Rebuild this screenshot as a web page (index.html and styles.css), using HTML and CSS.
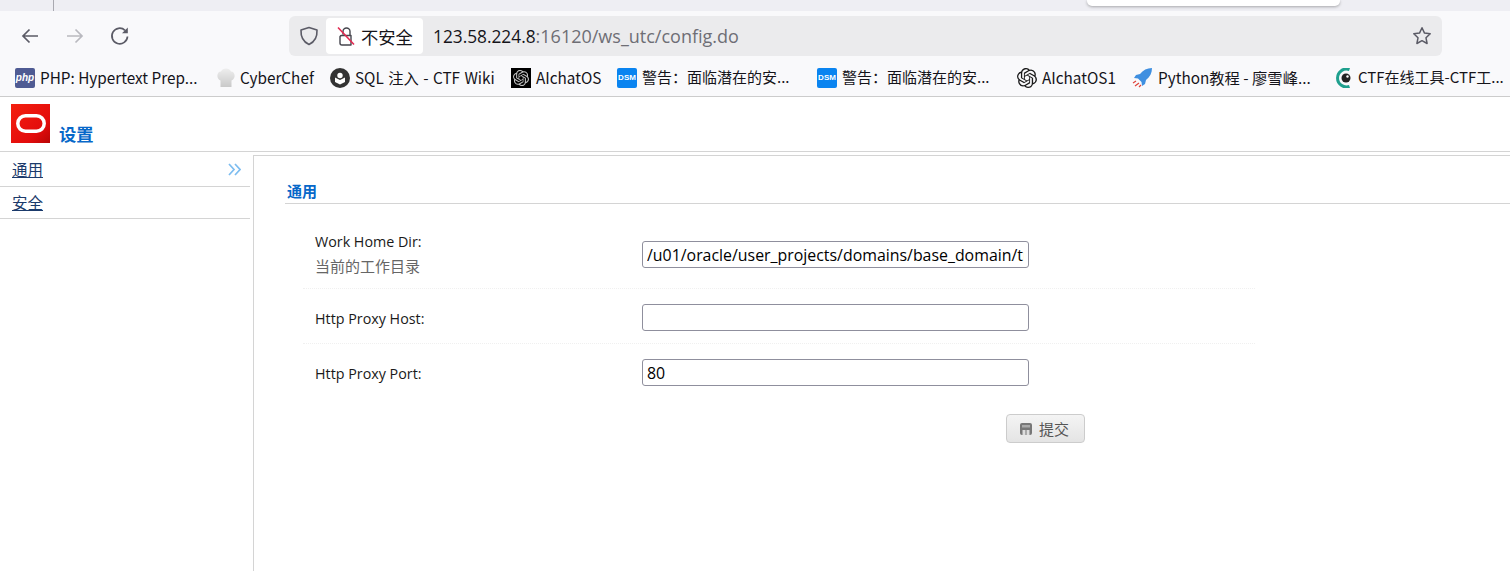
FILE: index.html
```html
<!DOCTYPE html>
<html lang="zh">
<head>
<meta charset="utf-8">
<title>设置</title>
<link rel="stylesheet" href="styles.css">
</head>
<body>
<div class="tabstrip"><span class="tabsep"></span><span class="popup"></span></div>
<div class="toolbar">
  <svg class="nav nav-back" viewBox="0 0 20 20"><path d="M18 10H3M9.500 3.500 3 10l6.500 6.500" fill="none" stroke="#5b5b66" stroke-width="1.700"/></svg>
  <svg class="nav nav-fwd" viewBox="0 0 20 20"><path d="M2 10h15M10.500 3.500 17 10l-6.500 6.500" fill="none" stroke="#b9b9bf" stroke-width="1.700"/></svg>
  <svg class="nav nav-reload" viewBox="0 0 20 20"><path d="M17.500 10.500A7.800 7.800 0 1 1 15 4.300" fill="none" stroke="#5b5b66" stroke-width="1.700"/><path d="M17.800 1.500v5.800H12z" fill="#5b5b66"/></svg>
  <div class="urlbar">
    <svg class="shield" viewBox="0 0 20 20"><path d="M10 1.500 18 4c.4 7.500-2.500 12-8 14.500C4.500 16 1.600 11.500 2 4z" fill="none" stroke="#5b5b66" stroke-width="1.600" stroke-linejoin="round"/></svg>
    <div class="insecure">
      <svg class="lock" viewBox="0 0 18 20"><path d="M6 8.500V5.500a3.500 3.500 0 0 1 7 0V9.500M3 10.500a2 2 0 0 1 2-1h9v9.500H5a2 2 0 0 1-2-2z" fill="none" stroke="#45454d" stroke-width="1.400" stroke-linejoin="round"/><path d="M1 1.500l16 17" stroke="#e22850" stroke-width="1.600"/></svg>
      <span>不安全</span>
    </div>
    <div class="url"><span class="host">123.58.224.8</span>:16120/ws_utc/config.do</div>
    <svg class="star" viewBox="0 0 20 20"><path d="m10 1.800 2.500 5.300 5.700.7-4.200 4 1.100 5.700-5.100-2.800-5.100 2.800L6 11.800l-4.200-4 5.700-.7z" fill="none" stroke="#5b5b66" stroke-width="1.500" stroke-linejoin="round"/></svg>
  </div>
</div>
<div class="bookmarks">
  <a class="bm bm-php"><span class="fav fav-php">php</span>PHP: Hypertext Prep...</a>
  <a class="bm bm-chef"><svg class="fav" viewBox="0 0 20 20"><defs><linearGradient id="ch" x1="0" y1="0" x2="0" y2="1"><stop offset="0" stop-color="#eeeeee"/><stop offset="1" stop-color="#c9c9c9"/></linearGradient></defs><path d="M4.500 12.500C0 11 .5 3.500 5 3.500c1.500-4 8.500-4 10 0 4.500 0 5 7.500.5 9V19h-11z" fill="url(#ch)"/></svg>CyberChef</a>
  <a class="bm bm-sql"><svg class="fav" viewBox="0 0 20 20"><circle cx="10" cy="10" r="10" fill="#333"/><path d="M5 9.500 10 12l5-2.500v4.500l-5 2.500-5-2.500z" fill="#fff"/><circle cx="10" cy="7.500" r="2.700" fill="#fff"/></svg>SQL 注入 - CTF Wiki</a>
  <a class="bm bm-ai"><span class="fav fav-ai"><svg class="knot knot-light" viewBox="0 0 24 24"><use href="#openai"/></svg></span>AIchatOS</a>
  <a class="bm bm-dsm"><span class="fav fav-dsm">DSM</span>警告：面临潜在的安...</a>
  <a class="bm bm-dsm2"><span class="fav fav-dsm">DSM</span>警告：面临潜在的安...</a>
  <a class="bm bm-ai1"><svg class="fav" viewBox="0 0 24 24"><path id="openai" d="M22.2819 9.8211a5.9847 5.9847 0 0 0-.5157-4.9108 6.0462 6.0462 0 0 0-6.5098-2.9A6.0651 6.0651 0 0 0 4.9807 4.1818a5.9847 5.9847 0 0 0-3.9977 2.9 6.0462 6.0462 0 0 0 .7427 7.0966 5.98 5.98 0 0 0 .511 4.9107 6.051 6.051 0 0 0 6.5146 2.9001A5.9847 5.9847 0 0 0 13.2599 24a6.0557 6.0557 0 0 0 5.7718-4.2058 5.9894 5.9894 0 0 0 3.9977-2.9001 6.0557 6.0557 0 0 0-.7475-7.0729zm-9.022 12.6081a4.4755 4.4755 0 0 1-2.8764-1.0408l.1419-.0804 4.7783-2.7582a.7948.7948 0 0 0 .3927-.6813v-6.7369l2.02 1.1686a.071.071 0 0 1 .038.052v5.5826a4.504 4.504 0 0 1-4.4945 4.4944zm-9.6607-4.1254a4.4708 4.4708 0 0 1-.5346-3.0137l.142.0852 4.783 2.7582a.7712.7712 0 0 0 .7806 0l5.8428-3.3685v2.3324a.0804.0804 0 0 1-.0332.0615L9.74 19.9502a4.4992 4.4992 0 0 1-6.1408-1.6464zM2.3408 7.8956a4.485 4.485 0 0 1 2.3655-1.9728V11.6a.7664.7664 0 0 0 .3879.6765l5.8144 3.3543-2.0201 1.1685a.0757.0757 0 0 1-.071 0l-4.8303-2.7865A4.504 4.504 0 0 1 2.3408 7.872zm16.5963 3.8558L13.1038 8.364 15.1192 7.2a.0757.0757 0 0 1 .071 0l4.8303 2.7913a4.4944 4.4944 0 0 1-.6765 8.1042v-5.6772a.79.79 0 0 0-.407-.667zm2.0107-3.0231l-.142-.0852-4.7735-2.7818a.7759.7759 0 0 0-.7854 0L9.409 9.2297V6.8974a.0662.0662 0 0 1 .0284-.0615l4.8303-2.7866a4.4992 4.4992 0 0 1 6.6802 4.66zM8.3065 12.863l-2.02-1.1638a.0804.0804 0 0 1-.038-.0567V6.0742a4.4992 4.4992 0 0 1 7.3757-3.4537l-.142.0805L8.704 5.459a.7948.7948 0 0 0-.3927.6813zm1.0976-2.3654l2.602-1.4998 2.6069 1.4998v2.9994l-2.5974 1.4997-2.6067-1.4997Z" fill="#1a1a1a"/></svg>AIchatOS1</a>
  <a class="bm bm-py"><svg class="fav" viewBox="0 0 20 20"><path d="M20 0c-5 0-9 2-12 6L4 7l-2 3 4 .5L9.500 14l.5 4 3-2 1-4c4-3 6-7 6-12z" fill="#3f8fe0"/><path d="M1 15l3-2M3 18l4-3M7 19l2-2" stroke="#e0433a" stroke-width="1.200"/></svg>Python教程 - 廖雪峰...</a>
  <a class="bm bm-ctf"><svg class="fav" viewBox="0 0 20 20"><path d="M15.500 1.500a9 9 0 1 0 0 17" fill="none" stroke="#1fa08e" stroke-width="3"/><circle cx="12" cy="10" r="4.500" fill="#222"/><circle cx="13.500" cy="8.500" r="1.200" fill="#fff"/></svg>CTF在线工具-CTF工...</a>
</div>
<header class="apphead">
  <svg class="logo" viewBox="0 0 39 39"><defs><linearGradient id="lg" x1="0" y1="0" x2="1" y2="1"><stop offset="0" stop-color="#f4200f"/><stop offset=".7" stop-color="#e30c0c"/><stop offset="1" stop-color="#b80505"/></linearGradient></defs><rect width="39" height="39" fill="url(#lg)"/><rect x="6.800" y="11.800" width="26.400" height="15.400" rx="7.700" fill="none" stroke="#fff" stroke-width="3.500"/></svg>
  <h1 class="title">设置</h1>
</header>
<div class="main">
  <nav class="side">
    <a class="side-item">通用<svg class="chev" viewBox="0 0 13 13"><path d="M1 1l5 5.500L1 12M7 1l5 5.500L7 12" fill="none" stroke="#7dbdf0" stroke-width="1.700"/></svg></a>
    <a class="side-item side-item-last">安全</a>
  </nav>
  <section class="panel">
    <h2 class="section-title">通用</h2>
    <form class="form">
      <div class="row row-first">
        <div class="label">Work Home Dir:<div class="hint">当前的工作目录</div></div>
        <input class="field" type="text" value="/u01/oracle/user_projects/domains/base_domain/tmp/WSUTC">
      </div>
      <div class="row">
        <div class="label label-single">Http Proxy Host:</div>
        <input class="field" type="text" value="">
      </div>
      <div class="row row-last">
        <div class="label label-single">Http Proxy Port:</div>
        <input class="field" type="text" value="80">
      </div>
      <div class="actions">
        <button class="submit" type="button"><svg class="save" viewBox="0 0 12 12"><rect width="12" height="12" rx="2" fill="#777"/><path d="M2 2h8v2.500H2z" fill="#aaa"/><path d="M2.500 7h7v5h-7z" fill="#ddd"/><path d="M5.500 7h1v5h-1z" fill="#777"/></svg>提交</button>
      </div>
    </form>
  </section>
</div>
</body>
</html>
```

FILE: styles.css
```css
html, body { margin: 0; padding: 0; height: 100%; overflow: hidden; background: #fff; }
body { font-family: "Noto Sans CJK SC", "Noto Sans", sans-serif; color: #15141a; }
a { color: inherit; }

.tabstrip { height: 11px; background: #eeeef3; position: relative; }
.tabsep { display: block; width: 1px; height: 11px; background: #a9a9b0; margin-left: 53px; }
.popup { position: absolute; left: 1087px; top: 0; width: 253px; height: 6px; background: #fff; border-radius: 0 0 5px 5px; box-shadow: 0 1px 3px rgba(0,0,0,.3); }

.toolbar { height: 45px; background: #f9f9fb; display: flex; align-items: flex-end; box-sizing: border-box; position: relative; }
.nav { width: 20px; height: 20px; flex: none; align-self: center; margin-top: 5px; }
.nav-back { margin-left: 20px; }
.nav-fwd { margin-left: 25px; }
.nav-reload { margin-left: 25px; }
.urlbar { margin-left: 159px; width: 1153px; height: 40px; background: #ebebed; border-radius: 6px; display: flex; align-items: center; flex: none; }
.shield { width: 20px; height: 20px; margin-left: 10px; flex: none; }
.insecure { margin-left: 7px; width: 97px; height: 36px; background: #fff; border-radius: 4px; display: flex; align-items: center; font-size: 17.300px; flex: none; padding-left: 11px; box-sizing: border-box; gap: 6px; white-space: nowrap; }
.lock { width: 18px; height: 20px; flex: none; }
.url { margin-left: 10px; font-family: "Open Sans", sans-serif; font-size: 18px; color: #6e6e75; white-space: nowrap; flex: 1; }
.host { color: #15141a; font-size: 17.300px; }
.star { width: 20px; height: 20px; margin-right: 10px; flex: none; }

.bookmarks { height: 39px; padding-top: 1px; background: #f9f9fb; border-bottom: 1px solid #ccc; display: flex; align-items: center; font-size: 15.300px; white-space: nowrap; position: relative; box-sizing: content-box; }
.bm { display: flex; align-items: center; gap: 5px; flex: none; }
.fav { width: 20px; height: 20px; flex: none; display: block; margin-top: 2px; }
.fav-php { background: #4f5b93; color: #fff; border-radius: 2px; font: italic bold 10px/20px "Liberation Sans", sans-serif; text-align: center; }
.fav-dsm { background: #0a84f0; color: #fff; border-radius: 2px; font: bold 8px/20px "Liberation Sans", sans-serif; text-align: center; }
.fav-ai { background: #000; padding: 2px; box-sizing: border-box; }
.knot { display: block; width: 16px; height: 16px; }
.knot-light { filter: invert(1) brightness(.85); }
.bm-php { margin-left: 15px; width: 201px; }
.bm-chef { width: 114px; gap: 4px; }
.bm-sql { width: 181px; word-spacing: 1px; }
.bm-ai { width: 106px; }
.bm-dsm { width: 200px; font-size: 15px; }
.bm-dsm2 { width: 200px; font-size: 15px; }
.bm-ai1 { width: 115px; }
.bm-py { width: 202px; gap: 6px; }
.bm-ctf { gap: 4px; font-size: 15px; }

.apphead { height: 54px; border-bottom: 1px solid #d4d4d4; display: flex; align-items: flex-start; box-sizing: content-box; }
.logo { width: 39px; height: 39px; margin: 7px 0 0 11px; flex: none; }
.title { margin: 27px 0 0 9px; font-size: 17.300px; line-height: 20px; font-weight: bold; color: #0768c9; }

.main { display: flex; height: 419px; }
.side { width: 250px; flex: none; }
.side-item { display: flex; justify-content: space-between; align-items: center; height: 31px; padding: 0 9px 0 12px; border-bottom: 1px solid #d4d4d4; font-size: 15.500px; color: #1b3a6b; text-decoration: underline; }
.side-item:first-child { height: 34px; }
.side-item-last { height: 29px; padding-bottom: 2px; }
.chev { width: 13px; height: 13px; }

.panel { margin: 3px 0 0 3px; flex: 1; border-left: 1px solid #d4d4d4; border-top: 1px solid #d4d4d4; }
.section-title { margin: 25px 0 0 31px; padding: 0 0 3px 2px; font-size: 15px; line-height: 19px; font-weight: bold; color: #0768c9; border-bottom: 1px solid #d4d4d4; }
.form { width: 952px; margin: 25px 0 0 49px; font-size: 14px; }
.row { display: flex; align-items: center; height: 52px; padding-top: 2px; border-bottom: 1px dotted #f0f0f0; }
.row-first { height: 50px; padding: 0 0 9px; }
.row-last { border-bottom: 0; }
.label { width: 327px; margin-left: 12px; font-family: "Open Sans", "Noto Sans CJK SC", sans-serif; font-size: 14.300px; line-height: 25px; flex: none; color: #1a1a1a; }
.label-single { padding-top: 2px; }
.hint { color: #666; font-size: 15px; }
.field { width: 387px; height: 27px; box-sizing: border-box; border: 1px solid #8f8f9d; border-radius: 3px; padding: 2px 4px 0; font-family: "Open Sans", sans-serif; font-size: 15.900px; color: #000; background: #fff; outline: 0; }
.actions { margin-top: 16px; padding-left: 703px; }
.submit { width: 79px; height: 29px; border: 1px solid #ccc; border-radius: 4px; background: linear-gradient(#f4f4f4, #e4e4e4); display: flex; align-items: center; justify-content: center; gap: 7px; font-family: "Noto Sans CJK SC", sans-serif; font-size: 15px; color: #555; padding: 0 2px 0 0; }
.save { width: 12px; height: 12px; }
```
